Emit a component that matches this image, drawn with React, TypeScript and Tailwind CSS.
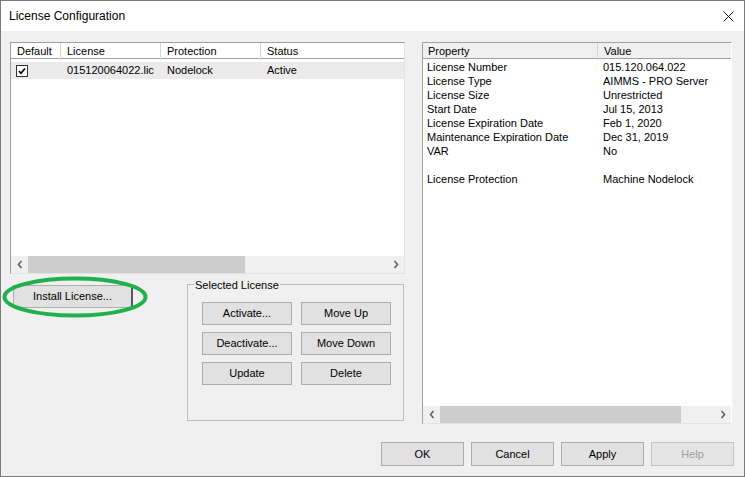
import React from "react";

type BtnProps = { children: React.ReactNode; className?: string; disabled?: boolean };

function Btn({ children, className = "", disabled }: BtnProps) {
  return (
    <div
      className={`flex h-[23px] items-center justify-center border text-[11px] ${
        disabled ? "border-[#c4c4c4] bg-[#e5e5e5] text-[#a0a0a0]" : "border-[#adadad] bg-[#e1e1e1] text-black"
      } ${className}`}
    >
      {children}
    </div>
  );
}

function Chevron({ dir }: { dir: "left" | "right" }) {
  return (
    <svg width="6" height="9" viewBox="0 0 6 9">
      <path
        d={dir === "left" ? "M4.5 1 L1.5 4.5 L4.5 8" : "M1.5 1 L4.5 4.5 L1.5 8"}
        fill="none"
        stroke="#606060"
        strokeWidth="1.6"
      />
    </svg>
  );
}

function HScroll({ thumbStart, thumbWidth }: { thumbStart: number; thumbWidth: number }) {
  return (
    <div className="flex h-[17px] shrink-0 items-stretch bg-[#f0f0f0]">
      <div className="flex w-[17px] items-center justify-center">
        <Chevron dir="left" />
      </div>
      <div className="relative flex-1">
        <div
          className="absolute top-0 bottom-0 bg-[#cdcdcd]"
          style={{ left: thumbStart, width: thumbWidth }}
        />
      </div>
      <div className="flex w-[17px] items-center justify-center">
        <Chevron dir="right" />
      </div>
    </div>
  );
}

const props: [string, string][] = [
  ["License Number", "015.120.064.022"],
  ["License Type", "AIMMS - PRO Server"],
  ["License Size", "Unrestricted"],
  ["Start Date", "Jul 15, 2013"],
  ["License Expiration Date", "Feb 1, 2020"],
  ["Maintenance Expiration Date", "Dec 31, 2019"],
  ["VAR", "No"],
  ["", ""],
  ["License Protection", "Machine Nodelock"],
];

export default function App() {
  return (
    <div className="flex h-[477px] w-[745px] flex-col border border-[#7a7a7a] bg-[#f0f0f0] font-['Liberation_Sans',Arial,sans-serif] text-[11px] text-black">
      {/* title bar */}
      <div className="flex h-[30px] shrink-0 items-center justify-between bg-white pl-[8px] pr-[10px]">
        <span className="text-[12px]">License Configuration</span>
        <svg width="11" height="11" viewBox="0 0 11 11">
          <path d="M0.5 0.5 L10.5 10.5 M10.5 0.5 L0.5 10.5" stroke="#111" strokeWidth="1" />
        </svg>
      </div>

      <div className="flex flex-1 flex-col pt-[11px] pl-[9px] pr-[10px]">
        <div className="flex gap-[17px]">
          {/* left column */}
          <div className="flex w-[395px] flex-col">
            <div className="flex h-[232px] flex-col border border-t-[#a0a0a0] border-l-[#a0a0a0] border-r-[#e3e3e3] border-b-[#e3e3e3] bg-white">
              <div className="flex h-[16px] shrink-0 items-center border-b border-[#a0a0a0] pt-[2px]">
                <div className="w-[50px] border-r border-[#d5d5d5] pl-[6px]">Default</div>
                <div className="w-[100px] border-r border-[#d5d5d5] pl-[6px]">License</div>
                <div className="w-[100px] border-r border-[#d5d5d5] pl-[6px]">Protection</div>
                <div className="flex-1 pl-[6px]">Status</div>
              </div>
              <div className="mt-[3px] flex h-[17px] items-center bg-[#ebebeb]">
                <div className="w-[50px] pl-[5px]">
                  <div className="flex h-[12px] w-[12px] items-center justify-center border border-[#333] bg-white">
                    <svg width="8" height="8" viewBox="0 0 8 8">
                      <path d="M1 4 L3 6.2 L7 1.5" fill="none" stroke="#000" strokeWidth="1.7" />
                    </svg>
                  </div>
                </div>
                <div className="w-[100px] pl-[6px]">015120064022.lic</div>
                <div className="w-[100px] pl-[6px]">Nodelock</div>
                <div className="flex-1 pl-[6px]">Active</div>
              </div>
              <div className="flex-1" />
              <HScroll thumbStart={0} thumbWidth={217} />
            </div>

            <div className="mt-[10px] flex items-start">
              <div className="relative ml-[3px] mt-[1px]">
                <Btn className="h-[22px] w-[120px] border-r-2 border-r-[#5a5a5a]">Install License...</Btn>
                <svg
                  className="pointer-events-none absolute left-[-11px] top-[-9px]"
                  width="146"
                  height="42"
                  viewBox="0 0 146 42"
                >
                  <ellipse cx="73" cy="21" rx="70.5" ry="18.5" fill="none" stroke="#21b04b" strokeWidth="4" />
                </svg>
              </div>
              <div className="relative ml-auto mr-[1px] h-[137px] w-[217px] border border-[#bdbdbd]">
                <span className="absolute left-[6px] top-[-8px] bg-[#f0f0f0] px-[1px]">Selected License</span>
                <div className="ml-[14px] mt-[17px] grid grid-cols-[90px_90px] gap-x-[9px] gap-y-[7px]">
                  <Btn>Activate...</Btn>
                  <Btn>Move Up</Btn>
                  <Btn>Deactivate...</Btn>
                  <Btn>Move Down</Btn>
                  <Btn>Update</Btn>
                  <Btn>Delete</Btn>
                </div>
              </div>
            </div>
          </div>

          {/* right panel */}
          <div className="flex h-[382px] w-[310px] flex-col border border-t-[#a0a0a0] border-l-[#a0a0a0] border-r-[#ffffff] border-b-[#e3e3e3] bg-white">
            <div className="flex h-[16px] shrink-0 items-center border-b border-[#a0a0a0] bg-[#f0f0f0] pt-[2px]">
              <div className="w-[175px] border-r border-[#d5d5d5] pl-[5px]">Property</div>
              <div className="flex-1 pl-[6px]">Value</div>
            </div>
            <div className="mt-[1px] flex flex-col">
              {props.map(([k, v], i) => (
                <div key={i} className="flex h-[14px] items-center leading-[14px]">
                  <div className="w-[175px] pl-[4px]">{k}</div>
                  <div className="flex-1 pl-[5px]">{v}</div>
                </div>
              ))}
            </div>
            <div className="flex-1" />
            <HScroll thumbStart={0} thumbWidth={241} />
          </div>
        </div>

        {/* bottom buttons */}
        <div className="mt-[18px] flex justify-end gap-[7px]">
          <Btn className="h-[24px] w-[83px]">OK</Btn>
          <Btn className="h-[24px] w-[83px]">Cancel</Btn>
          <Btn className="h-[24px] w-[83px]">Apply</Btn>
          <Btn className="h-[24px] w-[83px]" disabled>
            Help
          </Btn>
        </div>
      </div>
    </div>
  );
}
